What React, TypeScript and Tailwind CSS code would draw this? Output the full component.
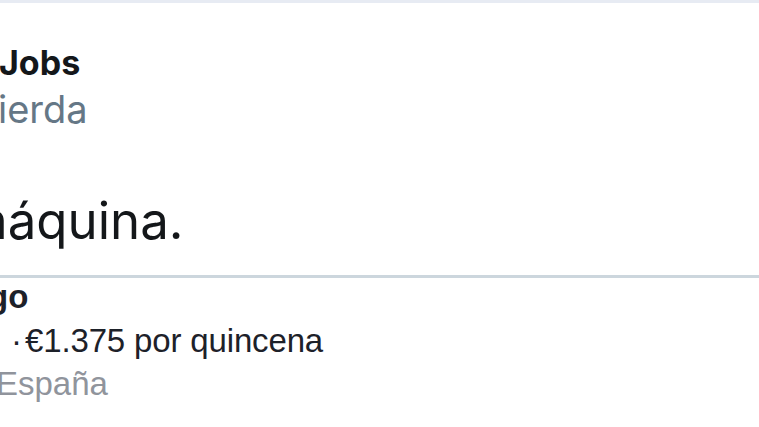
import React from "react";

export default function App() {
  return (
    <div className="w-[759px] h-[427px] overflow-hidden bg-white relative">
      <div className="h-[3px] bg-[#e7ebf3]" />
      <div className="whitespace-nowrap" style={{ fontFamily: "Inter, 'Noto Sans', sans-serif" }}>
        <div className="mt-[38px] text-[34px] leading-[44px] font-bold text-[#14171a] ml-[-1px]">Jobs</div>
        <div className="mt-[2px] text-[38px] leading-[44px] text-[#657786] ml-[-2px]">ierda</div>
        <div className="mt-[60px] text-[51px] leading-[60px] text-[#14171a] ml-[-37px]">máquina.</div>
      </div>
      <div className="mt-[24px] h-[3px] bg-[#ccd6dd]" />
      <div className="whitespace-nowrap" style={{ fontFamily: "'Liberation Sans', Arial, sans-serif" }}>
        <div className="text-[33px] leading-[37px] font-bold text-[#1d2129] ml-[-12px]">go</div>
        <div className="mt-[7px] text-[33px] leading-[37px] text-[#1d2129] flex">
          <span className="ml-[11px]">·</span>
          <span className="ml-[3px] tracking-[-0.15px]">€1.375 por quincena</span>
        </div>
        <div className="mt-[6px] text-[33px] leading-[37px] text-[#90949c] ml-[-4px]">España</div>
      </div>
    </div>
  );
}
